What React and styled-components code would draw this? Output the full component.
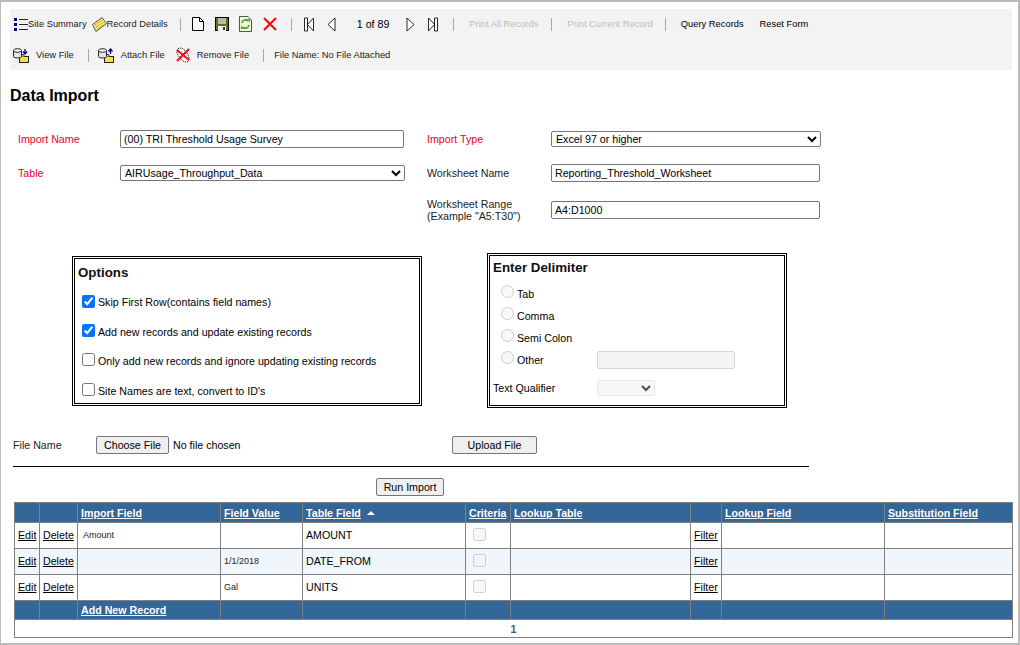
import React from 'react';
import styled, { createGlobalStyle } from 'styled-components';

const Global = createGlobalStyle`
  html, body { margin: 0; padding: 0; background: #fff; }
  body { font-family: "Liberation Sans", Arial, sans-serif; font-size: 10.67px; color: #000; }
`;

const Page = styled.div`
  box-sizing: border-box;
  width: 1020px;
  height: 645px;
  overflow: hidden;
  border-top: 2px solid #bbb;
  border-left: 1px solid #bbb;
  border-right: 2px solid #bbb;
  border-bottom: 2px solid #bbb;
  padding: 7px 6px 0 9px;
`;

const Toolbar = styled.div`
  background: #f3f3f3;
  height: 61px;
  width: 1002px;
  font-size: 9.33px;
  color: #222;
`;

const ToolRow = styled.div`
  display: flex;
  align-items: center;
  height: 30px;
  padding-left: ${p => p.$pad || 4}px;
  padding-top: ${p => p.$top || 0}px;
`;

const ToolText = styled.span`
  color: ${p => (p.$off ? '#bdbdbd' : p.$dark ? '#000' : '#222')};
  margin-left: ${p => p.$ml || 0}px;
  margin-right: ${p => p.$mr || 0}px;
  white-space: nowrap;
`;

const Counter = styled(ToolText)`
  font-size: 10.67px;
`;

const Sep = styled.span`
  width: 1px;
  height: 13px;
  background: #a8a8a8;
  margin-left: ${p => p.$ml || 0}px;
  margin-right: ${p => p.$mr || 0}px;
  flex: none;
`;

const Ico = styled.svg`
  flex: none;
  display: block;
  margin-left: ${p => p.$ml || 0}px;
  margin-right: ${p => p.$mr || 0}px;
`;

const Title = styled.h1`
  font-size: 16px;
  font-weight: bold;
  line-height: 18px;
  margin: 17px 0 0 0;
`;

const FormGrid = styled.div`
  display: grid;
  grid-template-columns: 102px 285px 22px 124px 270px;
  grid-template-rows: 18px 18px 24px;
  row-gap: 16px;
  margin: 25px 0 0 8px;
  align-items: center;
`;

const Label = styled.label`
  color: ${p => (p.$req ? '#f0002a' : '#222')};
  line-height: 12px;
  grid-column: ${p => p.$col};
  grid-row: ${p => p.$row};
`;

const TextInput = styled.input`
  box-sizing: border-box;
  width: ${p => p.$w || 284}px;
  height: 18px;
  border: 1px solid #767676;
  border-radius: 2px;
  padding: 0 3px;
  font: 10.67px "Liberation Sans", Arial, sans-serif;
  color: #000;
  background: #fff;
  grid-column: ${p => p.$col};
  grid-row: ${p => p.$row};
  &:disabled { background: #f4f4f4; border-color: #d4d4d4; }
`;

const OtherInput = styled(TextInput)`
  margin-top: 2px;
`;

const Select = styled.select`
  box-sizing: border-box;
  width: ${p => p.$w}px;
  height: ${p => p.$h || 16}px;
  border: 1px solid #767676;
  border-radius: 2px;
  font: 10.67px "Liberation Sans", Arial, sans-serif;
  color: #000;
  background-color: #fff;
  grid-column: ${p => p.$col};
  grid-row: ${p => p.$row};
  &:disabled { background: #f4f4f4; border-color: #dcdcdc; }
`;

const Boxes = styled.div`
  display: flex;
  align-items: center;
  margin: 31px 0 0 62px;
`;

const Box = styled.div`
  box-sizing: border-box;
  width: ${p => p.$w}px;
  height: ${p => p.$h}px;
  border: 3px double #000;
  padding: ${p => p.$pad};
  margin-right: ${p => p.$mr || 0}px;
`;

const BoxTitle = styled.div`
  font-size: 13.33px;
  font-weight: bold;
  line-height: 14px;
  color: #111;
  margin-bottom: ${p => p.$mb || 0}px;
`;

const CheckRow = styled.label`
  display: flex;
  align-items: center;
  height: 13px;
  margin-top: ${p => p.$mt}px;
  margin-left: 4px;
`;

const CheckText = styled.span`
  padding-top: ${p => p.$shift * 2}px;
`;

const Check = styled.input.attrs({ type: 'checkbox' })`
  width: 13px;
  height: 13px;
  margin: 0 3px 0 0;
  accent-color: #0075ff;
  flex: none;
`;

const RadioRow = styled.div`
  display: flex;
  align-items: center;
  height: 22px;
  padding-left: 8px;
`;

const Radio = styled.input.attrs({ type: 'radio', disabled: true })`
  width: 13px;
  height: 13px;
  margin: -4px 3px 0 0;
  flex: none;
`;

const RadioLabel = styled.span`
  width: 80px;
  padding-top: 2px;
  flex: none;
`;

const QualifierRow = styled.div`
  display: flex;
  align-items: center;
  height: 22px;
  margin-top: 7px;
  & > span { width: 104px; }
`;

const FileRow = styled.div`
  display: flex;
  align-items: center;
  height: 18px;
  margin: 28px 0 0 3px;
`;

const FileLabel = styled.span`
  width: 83px;
  flex: none;
  color: #222;
`;

const Btn = styled.button`
  box-sizing: border-box;
  height: 18px;
  width: ${p => p.$w}px;
  border: 1px solid #767676;
  border-radius: 2px;
  background: #efefef;
  padding: 0;
  font: 10.67px "Liberation Sans", Arial, sans-serif;
  color: #000;
  flex: none;
`;

const NoFile = styled.span`
  margin-left: 4px;
  width: 279px;
  flex: none;
`;

const Rule = styled.hr`
  width: 796px;
  height: 1px;
  background: #000;
  border: 0;
  margin: 12px 0 0 3px;
`;

const RunRow = styled.div`
  display: flex;
  margin: 11px 0 0 366px;
`;

const Grid = styled.table`
  border-collapse: collapse;
  table-layout: fixed;
  width: 999px;
  margin: 6px 0 0 4px;
  border: 1px solid #808080;
  font-size: 10.67px;
  & td, & th { border: 1px solid #808080; padding: 0 3px; overflow: hidden; white-space: nowrap; }
`;

const HeadRow = styled.tr`
  background: #336699;
  height: ${p => p.$h || 19}px;
  & th { color: #fff; font-weight: bold; text-align: left; }
`;

const Row = styled.tr`
  height: 26px;
  background: ${p => (p.$alt ? '#eff7fd' : '#fff')};
  & td { padding-bottom: 2px; }
`;

const Link = styled.a`
  color: ${p => (p.$light ? '#fff' : '#000')};
  text-decoration: underline;
  font-weight: ${p => (p.$light ? 'bold' : 'normal')};
`;

const Small = styled.span`
  font-size: 9px;
  position: relative;
  top: -1px;
  margin-left: ${p => p.$ml || 0}px;
  color: #222;
`;

const Pager = styled.td`
  height: 17px;
  text-align: center;
  font-weight: bold;
  color: #4a5a6a;
  background: #fff;
`;

const GridCheck = styled.input.attrs({ type: 'checkbox', disabled: true })`
  width: 13px;
  height: 13px;
  margin: 0 0 0 4px;
  vertical-align: middle;
`;

const SortUp = styled.span`
  display: inline-block;
  width: 0;
  height: 0;
  border-left: 4px solid transparent;
  border-right: 4px solid transparent;
  border-bottom: 4px solid #fff;
  margin: 0 0 2px 6px;
`;

const ListIcon = () => (
  <Ico width="14" height="14" viewBox="0 0 14 14">
    <g fill="#000080"><rect x="0" y="1" width="3" height="3"/><rect x="0" y="6" width="3" height="3"/><rect x="0" y="11" width="3" height="3"/></g>
    <g fill="#222"><rect x="5" y="2" width="9" height="1"/><rect x="5" y="7" width="9" height="1"/><rect x="5" y="12" width="9" height="1"/></g>
  </Ico>
);
const NoteIcon = () => (
  <Ico $ml="5" width="15" height="15" viewBox="0 0 15 15">
    <path d="M.5 7.5L10 .5L14.5 6.5L4 14.5Z" fill="#f4e76a" stroke="#444" strokeWidth="0.9"/>
    <path d="M3 8l7-5M4 10l7-5M5.5 12l7-5" stroke="#9a8a30" strokeWidth="0.9" strokeDasharray="1 1"/>
  </Ico>
);
const DocIcon = () => (
  <Ico width="12" height="14" viewBox="0 0 12 14">
    <path d="M.5 .5H7.5L11.5 4.5V13.5H.5Z" fill="#fff" stroke="#000"/><path d="M7.5 .5V4.5H11.5" fill="none" stroke="#000"/>
  </Ico>
);
const SaveIcon = () => (
  <Ico $ml="11" width="14" height="14" viewBox="0 0 14 14">
    <rect width="14" height="14" fill="#000"/><rect x="1" y="1" width="12" height="12" fill="#6b6b1e"/>
    <rect x="3" y="1" width="8" height="6" fill="#b8b8b8"/><rect x="3" y="9" width="8" height="5" fill="#f0f0f0"/><rect x="8" y="10" width="2" height="3" fill="#333"/>
  </Ico>
);
const RefreshIcon = () => (
  <Ico $ml="10" width="13" height="16" viewBox="0 0 13 16">
    <path d="M.5 .5H9L12.5 4V15.5H.5Z" fill="#f7f3d6" stroke="#555"/>
    <path d="M3 7a3.5 3.5 0 0 1 6-2M10 9a3.5 3.5 0 0 1-6 2" fill="none" stroke="#2fa52f" strokeWidth="1.6"/>
    <path d="M8 3h3v3.5ZM5 13H2V9.5Z" fill="#2fa52f"/>
  </Ico>
);
const XIcon = () => (
  <Ico $ml="11" width="14" height="14" viewBox="0 0 14 14">
    <path d="M1 1L13 13M13 1L1 13" stroke="#ee1111" strokeWidth="2.2"/>
  </Ico>
);
const NavIcon = ({ d, w = 10, ml }) => (
  <Ico $ml={ml} width={w} height="15" viewBox={`0 0 ${w} 15`}>
    <path d={d} fill="#fff" stroke="#111" strokeWidth="0.9"/>
  </Ico>
);
const DbIcon = ({ up }) => (
  <Ico width="16" height="15" viewBox="0 0 16 15">
    <rect x="6.5" y="8.5" width="9" height="6" fill="#f4e33a" stroke="#222"/>
    <path d="M6.5 8.5l1-2h3l1 2" fill="#f4e33a" stroke="#222"/>
    <path d="M.5 2.5v6c0 2 8 2 8 0v-6Z" fill="#e4e4e4" stroke="#222"/>
    <ellipse cx="4.5" cy="2.5" rx="4" ry="1.8" fill="#fff" stroke="#222"/>
    <path d={up ? 'M12.5 6V2M10.5 3.5l2-2.5 2 2.5' : 'M12 1V5M10 3.5l2 2.5 2-2.5'} fill="none" stroke="#000080" strokeWidth="1.3"/>
  </Ico>
);
const RemoveIcon = () => (
  <Ico $ml="10" width="16" height="16" viewBox="0 0 16 16">
    <path d="M5 1c3 0 6 3 8 7s1 7-2 7-6-4-8-7S2 1 5 1Z" fill="#fff" stroke="#222" strokeDasharray="1.4 .8"/>
    <path d="M2 3L14 13M14 2L2 14" stroke="#ee1122" strokeWidth="2.2"/>
  </Ico>
);

const rows = [
  { a: 'Amount', b: '', c: 'AMOUNT' },
  { a: '', b: '1/1/2018', c: 'DATE_FROM', alt: true },
  { a: '', b: 'Gal', c: 'UNITS' },
];
const widths = [25, 38, 143, 82, 163, 45, 180, 31, 163, 128];

export default function App() {
  return (
    <Page>
      <Global />
      <Toolbar>
        <ToolRow>
          <ListIcon /><ToolText>Site Summary</ToolText>
          <NoteIcon /><ToolText>Record Details</ToolText>
          <Sep $ml="12" $mr="11" />
          <DocIcon />
          <SaveIcon />
          <RefreshIcon />
          <XIcon />
          <Sep $ml="14" $mr="12" />
          <NavIcon w="10" d="M.5 1h3v13h-3ZM3.5 7.5L9.5 1V14Z" />
          <NavIcon ml="13" w="9" d="M8 1V14L1 7.5Z" />
          <Counter $ml="21" $dark>1 of 89</Counter>
          <NavIcon ml="17" w="9" d="M1 1V14L8 7.5Z" />
          <NavIcon ml="13" w="10" d="M.5 1L6.5 7.5 .5 14ZM6.5 1h3v13h-3Z" />
          <Sep $ml="15" $mr="15" />
          <ToolText $off>Print All Records</ToolText>
          <Sep $ml="13" $mr="15" />
          <ToolText $off>Print Current Record</ToolText>
          <Sep $ml="12" $mr="15" />
          <ToolText $dark>Query Records</ToolText>
          <ToolText $dark $ml="16">Reset Form</ToolText>
        </ToolRow>
        <ToolRow $top="1" $pad="3">
          <DbIcon /><ToolText $ml="7">View File</ToolText>
          <Sep $ml="14" $mr="9" />
          <DbIcon up /><ToolText $ml="7">Attach File</ToolText>
          <RemoveIcon /><ToolText $ml="6">Remove File</ToolText>
          <Sep $ml="14" $mr="10" />
          <ToolText>File Name: No File Attached</ToolText>
        </ToolRow>
      </Toolbar>
      <Title>Data Import</Title>
      <FormGrid>
        <Label $req $col="1" $row="1">Import Name</Label>
        <TextInput $col="2" $row="1" defaultValue="(00) TRI Threshold Usage Survey" />
        <Label $req $col="1" $row="2">Table</Label>
        <Select $col="2" $row="2" $w={285}><option>AIRUsage_Throughput_Data</option></Select>
        <Label $req $col="4" $row="1">Import Type</Label>
        <Select $col="5" $row="1" $w={270}><option>Excel 97 or higher</option></Select>
        <Label $col="4" $row="2">Worksheet Name</Label>
        <TextInput $col="5" $row="2" $w={269} defaultValue="Reporting_Threshold_Worksheet" />
        <Label $col="4" $row="3">Worksheet Range<br />(Example "A5:T30")</Label>
        <TextInput $col="5" $row="3" $w={269} defaultValue="A4:D1000" />
      </FormGrid>
      <Boxes>
        <Box $w={350} $h={150} $pad="7px 3px" $mr={65}>
          <BoxTitle>Options</BoxTitle>
          <CheckRow $mt={15}><Check defaultChecked /><CheckText $shift={1}>Skip First Row(contains field names)</CheckText></CheckRow>
          <CheckRow $mt={16}><Check defaultChecked /><CheckText $shift={2}>Add new records and update existing records</CheckText></CheckRow>
          <CheckRow $mt={16}><Check /><CheckText $shift={2}>Only add new records and ignore updating existing records</CheckText></CheckRow>
          <CheckRow $mt={17}><Check /><CheckText $shift={2}>Site Names are text, convert to ID's</CheckText></CheckRow>
        </Box>
        <Box $w={300} $h={155} $pad="5px 3px">
          <BoxTitle $mb={7}>Enter Delimiter</BoxTitle>
          <RadioRow><Radio /><RadioLabel>Tab</RadioLabel></RadioRow>
          <RadioRow><Radio /><RadioLabel>Comma</RadioLabel></RadioRow>
          <RadioRow><Radio /><RadioLabel>Semi Colon</RadioLabel></RadioRow>
          <RadioRow><Radio /><RadioLabel>Other</RadioLabel><OtherInput disabled $w={138} /></RadioRow>
          <QualifierRow><span>Text Qualifier</span><Select disabled $w={58}><option></option></Select></QualifierRow>
        </Box>
      </Boxes>
      <FileRow>
        <FileLabel>File Name</FileLabel>
        <Btn $w={73}>Choose File</Btn>
        <NoFile>No file chosen</NoFile>
        <Btn $w={85}>Upload File</Btn>
      </FileRow>
      <Rule />
      <RunRow><Btn $w={68}>Run Import</Btn></RunRow>
      <Grid>
        <colgroup>{widths.map((w, i) => <col key={i} style={{ width: w }} />)}</colgroup>
        <thead>
          <HeadRow $h={20}>
            <th></th><th></th>
            <th><Link $light>Import Field</Link></th>
            <th><Link $light>Field Value</Link></th>
            <th><Link $light>Table Field</Link><SortUp /></th>
            <th><Link $light>Criteria</Link></th>
            <th><Link $light>Lookup Table</Link></th>
            <th></th>
            <th><Link $light>Lookup Field</Link></th>
            <th><Link $light>Substitution Field</Link></th>
          </HeadRow>
        </thead>
        <tbody>
          {rows.map(r => (
            <Row key={r.c} $alt={r.alt}>
              <td><Link>Edit</Link></td>
              <td><Link>Delete</Link></td>
              <td><Small $ml={2}>{r.a}</Small></td>
              <td><Small>{r.b}</Small></td>
              <td>{r.c}</td>
              <td><GridCheck /></td>
              <td></td>
              <td><Link>Filter</Link></td>
              <td></td>
              <td></td>
            </Row>
          ))}
          <HeadRow>
            <th></th><th></th>
            <th><Link $light>Add New Record</Link></th>
            <th></th><th></th><th></th><th></th><th></th><th></th><th></th>
          </HeadRow>
          <tr><Pager colSpan={10}>1</Pager></tr>
        </tbody>
      </Grid>
    </Page>
  );
}
